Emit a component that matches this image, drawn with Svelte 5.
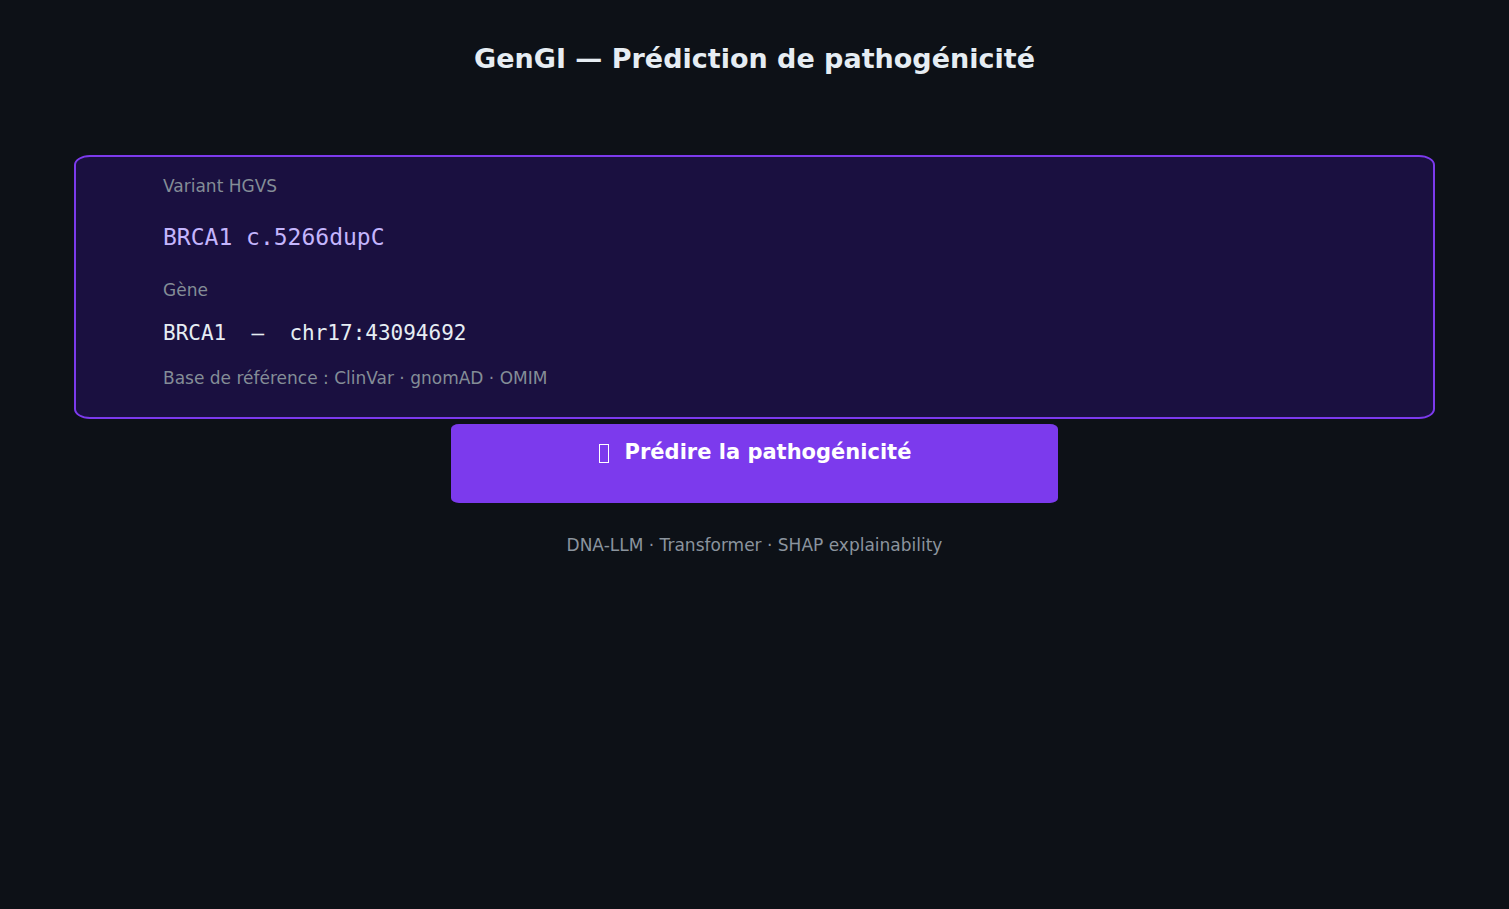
<script>
	const title = "GenGI — Prédiction de pathogénicité";

	const variant = "BRCA1 c.5266dupC";
	const gene = "BRCA1";
	const locus = "chr17:43094692";
	const databases = ["ClinVar", "gnomAD", "OMIM"];
	const methods = ["DNA-LLM", "Transformer", "SHAP explainability"];
</script>

<svelte:head>
	<title>{title}</title>
</svelte:head>

<main class="page">
	<h1 class="title">{title}</h1>

	<section class="card">
		<dl class="fields">
			<dt class="label">Variant HGVS</dt>
			<dd class="variant">{variant}</dd>
			<dt class="label">Gène</dt>
			<dd class="gene">{`${gene}  —  ${locus}`}</dd>
		</dl>
		<p class="note">Base de référence : {databases.join(" · ")}</p>
	</section>

	<button class="predict" type="button">
		<svg class="icon" width="12" height="20" viewBox="0 0 12 20" aria-hidden="true">
			<rect x="1.5" y="0.5" width="9" height="18" fill="none" stroke="currentColor" />
		</svg>
		<span>Prédire la pathogénicité</span>
	</button>

	<p class="methods">{methods.join(" · ")}</p>
</main>

<style>
	:global(body) {
		margin: 0;
		background: #0d1117;
	}

	.page {
		display: flex;
		flex-direction: column;
		align-items: center;
		padding: 43px 74px;
		font-family: "DejaVu Sans", sans-serif;
		font-size: 17px;
		line-height: 20px;
		color: #8b949e;
	}

	.title {
		margin: 0 0 80px;
		font-size: 27px;
		font-weight: 700;
		line-height: 32px;
		color: #e6edf3;
	}

	.card {
		box-sizing: border-box;
		width: 100%;
		padding: 19px 87px 29px;
		border: 2px solid #7c3aed;
		border-radius: 16px / 10px;
		background: #1a1040;
	}

	.fields {
		margin: 0;
	}

	.label {
		color: #848d97;
	}

	.variant,
	.gene {
		margin: 0;
		font-family: "DejaVu Sans Mono", monospace;
		line-height: 28px;
		white-space: pre-wrap;
	}

	.variant {
		padding: 27px 0 29px;
		font-size: 23px;
		color: #c4b5fd;
	}

	.gene {
		padding: 19px 0 21px;
		font-size: 21px;
		color: #e6edf3;
	}

	.note {
		margin: 0;
		color: #848d97;
	}

	.predict {
		display: flex;
		justify-content: center;
		align-items: flex-start;
		gap: 15px;
		box-sizing: border-box;
		width: 607px;
		max-width: 100%;
		min-height: 79px;
		margin: 5px 0 32px;
		padding: 14px 16px 36px;
		border: 0;
		border-radius: 8px / 5px;
		background: #7c3aed;
		color: #fff;
		font-family: inherit;
		font-size: 21px;
		font-weight: 700;
		line-height: 28px;
		cursor: pointer;
	}

	.icon {
		margin-top: 6px;
	}

	.methods {
		margin: 0;
	}
</style>
